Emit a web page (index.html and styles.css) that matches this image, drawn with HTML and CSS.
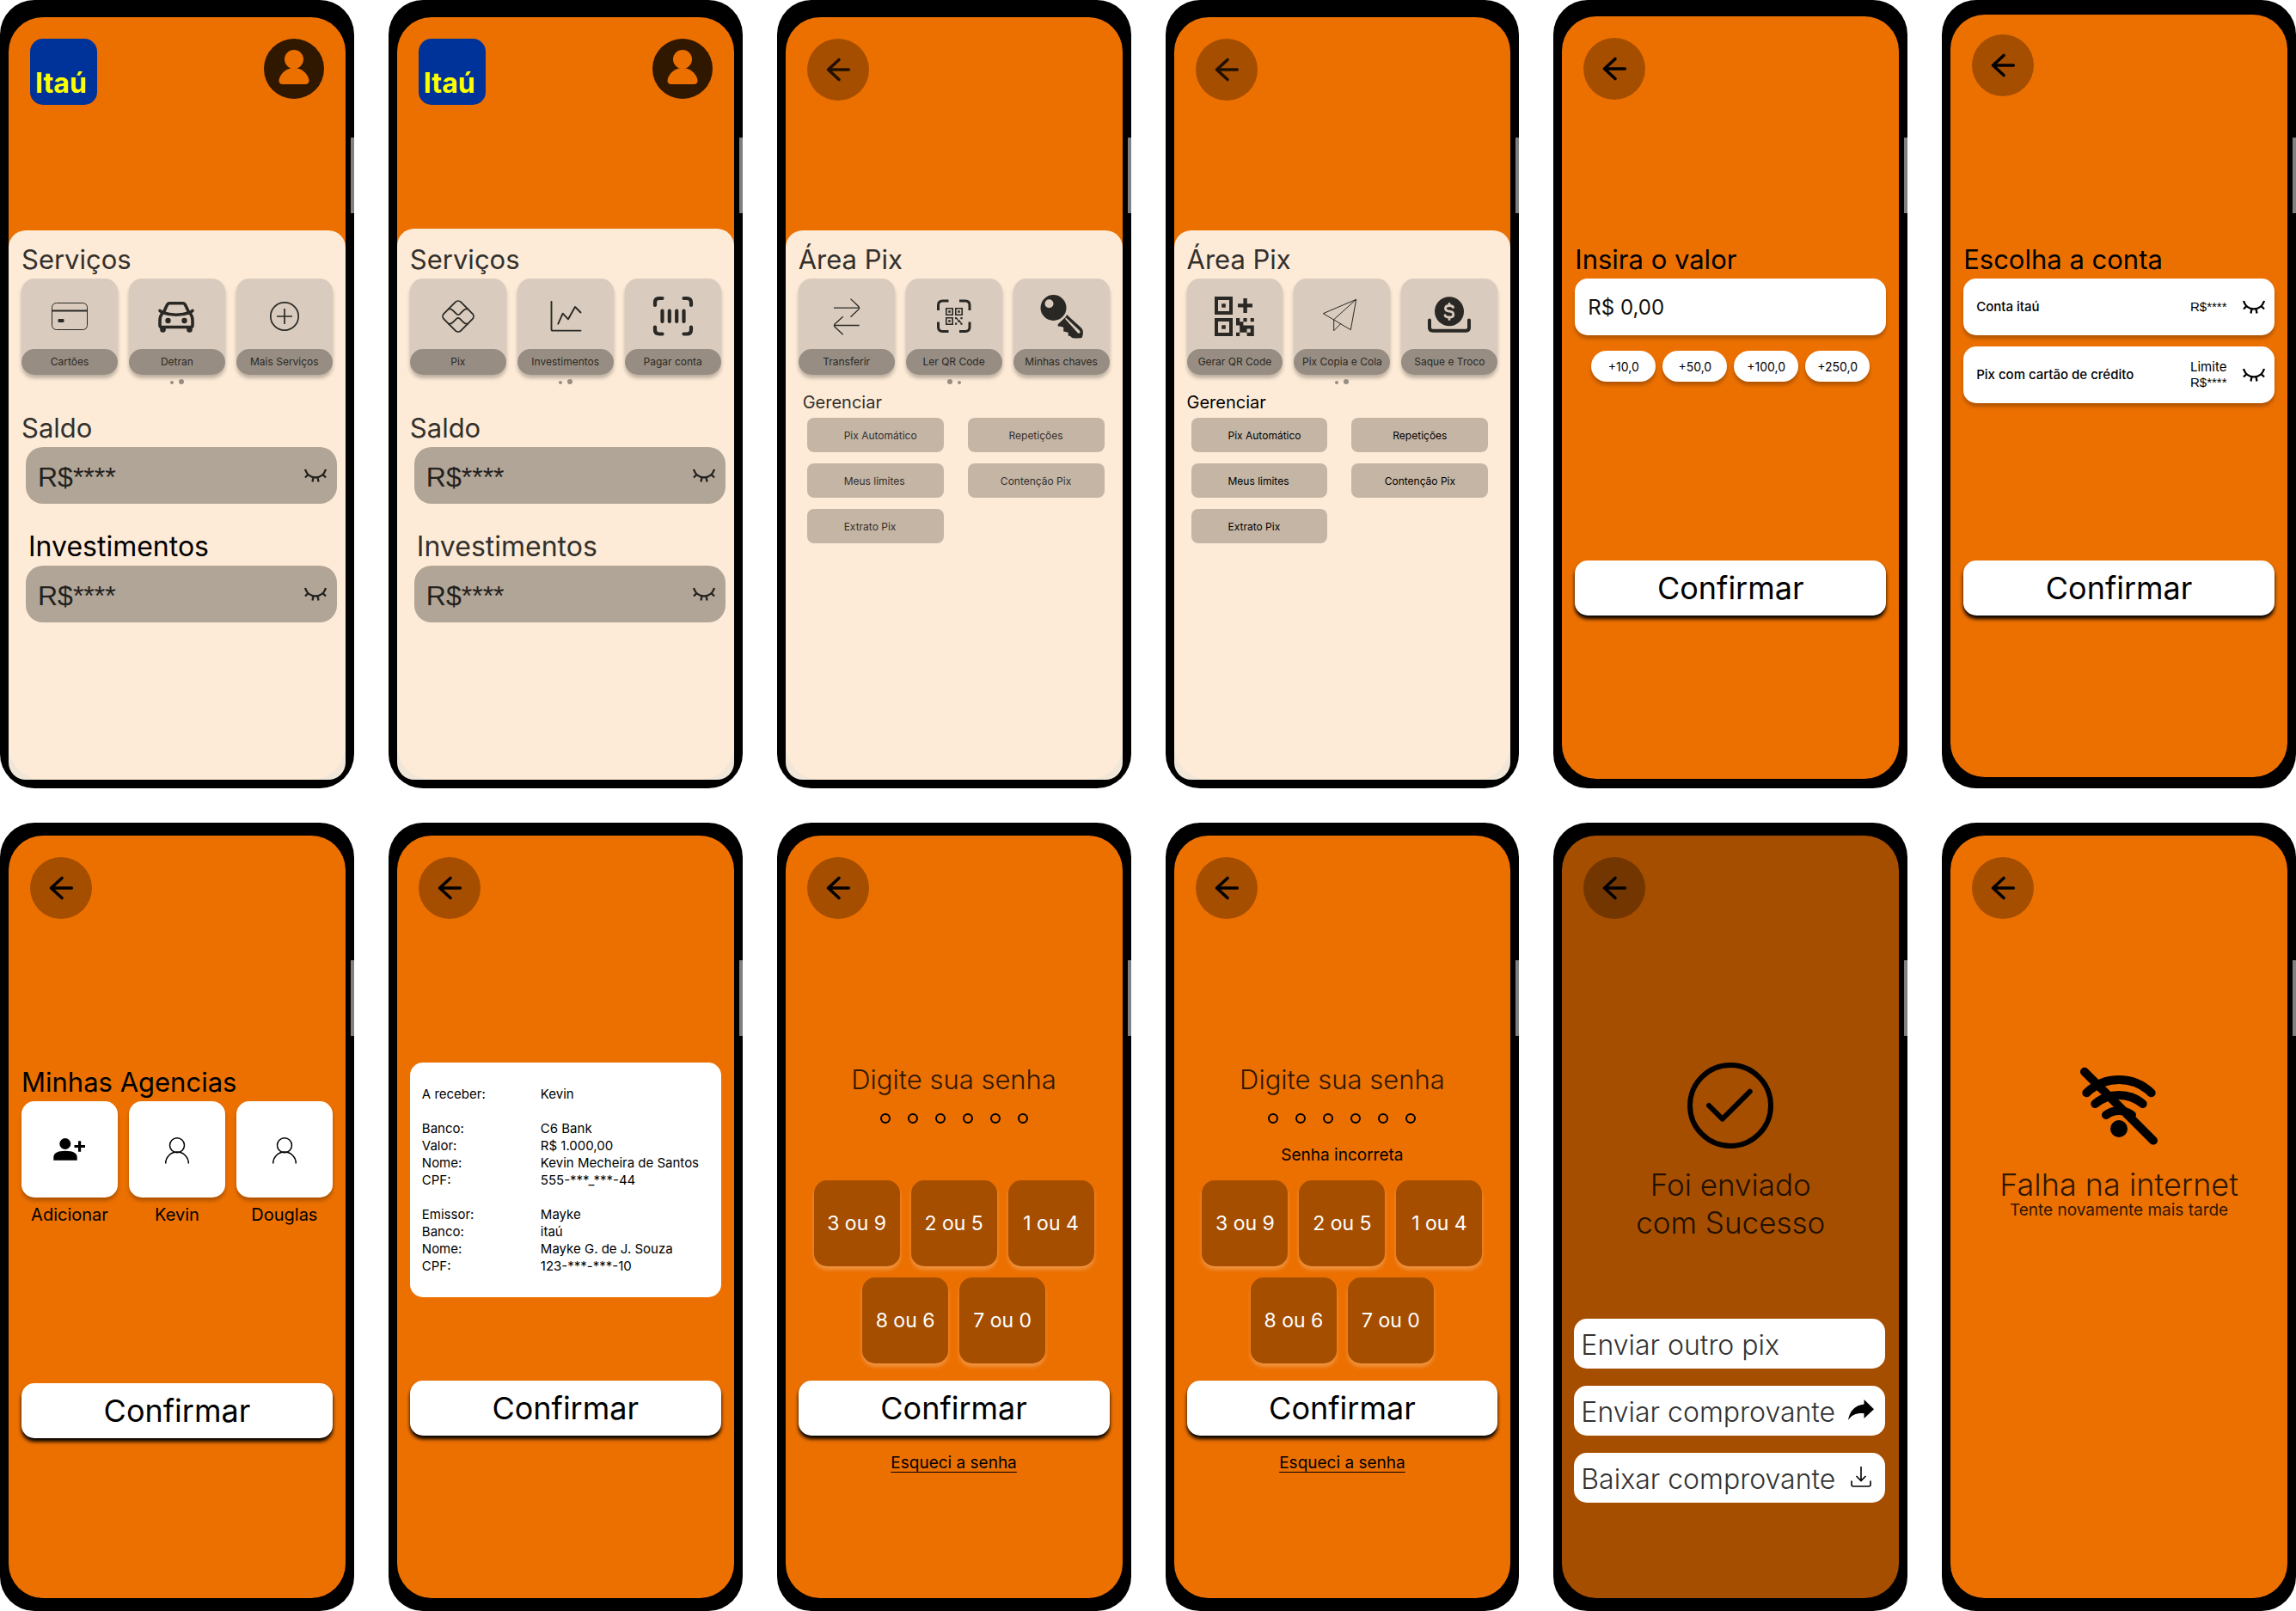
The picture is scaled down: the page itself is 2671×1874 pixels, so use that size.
FILE: index.html
```html
<!DOCTYPE html>
<html lang="pt-BR">
<head>
<meta charset="utf-8">
<meta name="viewport" content="width=device-width, initial-scale=1">
<title>Itaú - Telas do aplicativo</title>
<link rel="stylesheet" href="styles.css">
</head>
<body>
<svg class="sprite" aria-hidden="true">
  <symbol id="i-back" viewBox="0 0 72 72"><path d="M48.300 36H24.500M37 24.500L24.500 36l12.500 11.500" fill="none" stroke="currentColor" stroke-width="3.600" stroke-linecap="round" stroke-linejoin="round"/></symbol>
  <symbol id="i-user" viewBox="0 0 70 70"><circle cx="35" cy="24" r="11" fill="currentColor"/><path d="M17.500 48C19 40 27 34 35 34s16 6 17.500 14q.5 5-4.500 5H22q-5 0-4.500-5z" fill="currentColor"/></symbol>
  <symbol id="i-eye" viewBox="0 0 26 16"><path d="M1 1C5 13.500 21 13.500 25 1M4.500 7L1 10.500M21.500 7l3.500 3.500M10.500 10L9.500 15.500M15.500 10l1 5.500" fill="none" stroke="currentColor" stroke-width="2.300"/></symbol>
  <symbol id="i-card" viewBox="0 0 60 60"><rect x="9.500" y="17.500" width="41" height="31" rx="5" fill="none" stroke="currentColor"/><path d="M9.500 26.500h41" stroke="currentColor" stroke-width="2"/><rect x="16.500" y="36" width="7" height="4" rx="1" fill="currentColor"/></symbol>
  <symbol id="i-car" viewBox="0 0 60 60"><g fill="none" stroke="currentColor" stroke-linecap="round" stroke-linejoin="round"><path d="M14.500 28L18.500 19.500Q19.300 17.800 21 17.800H37Q38.700 17.800 39.500 19.500L43.500 28" stroke-width="3.600"/><path d="M10 26.500L13 28.500Q29 34 45 28.500L48 26.500" stroke-width="3.600"/><path d="M13.500 29Q10 32 10 38V43.500Q10 45.500 12 45.500H46Q48 45.500 48 43.500V38Q48 32 44.500 29" stroke-width="3.600"/></g><circle cx="19.500" cy="38" r="3.200" fill="currentColor"/><circle cx="38.500" cy="38" r="3.200" fill="currentColor"/><path d="M10.200 44h6.600v4.500a3.300 3.300 0 0 1-6.600 0zM41.200 44h6.600v4.500a3.300 3.300 0 0 1-6.600 0z" fill="currentColor"/></symbol>
  <symbol id="i-plus" viewBox="0 0 60 60"><path d="M30 24v18M21 33h18" stroke="currentColor" stroke-width="1.700"/><circle cx="30" cy="33" r="16.200" fill="none" stroke="currentColor" stroke-width="1.700"/></symbol>
  <symbol id="i-pix" viewBox="0 0 60 60"><g fill="none" stroke="currentColor" stroke-width="1.800"><rect x="16" y="19" width="28" height="28" rx="4.500" transform="rotate(45 30 33)"/><path d="M18 24.300h2q2 0 3.600 1.600l4.600 4.500q1.800 1.500 3.600 0l4.600-4.500q1.600-1.600 3.600-1.600h2M18 41.700h2q2 0 3.600-1.600l4.600-4.500q1.800-1.500 3.600 0l4.600 4.500q1.600 1.600 3.600 1.600h2"/></g></symbol>
  <symbol id="i-chart" viewBox="0 0 60 60"><path d="M13.500 16v32q0 1.600 1.600 1.600H47.500M21.300 41.700l5.400-12 6.300 6.600 8-14.300 6.500 6.500" fill="none" stroke="currentColor" stroke-width="1.900" stroke-linecap="round" stroke-linejoin="round"/></symbol>
  <symbol id="i-barcode" viewBox="0 0 60 60"><path d="M9 20v-3q0-5 5-5h3.500M42.500 12H46q5 0 5 5v3M51 45.500v3q0 5-5 5h-3.500M17.500 53.500H14q-5 0-5-5v-3M17.500 26.500v12.500M25.800 26.500v12.500M34.200 26.500v12.500M42.500 26.500v12.500" fill="none" stroke="currentColor" stroke-width="4.200" stroke-linecap="round"/></symbol>
  <symbol id="i-transfer" viewBox="0 0 60 60"><path d="M15 23.200h29.500M34.500 12.600l9.600 9.200q1.200 1.400 0 2.800l-9.600 9.100M44.700 43.500H15.300M25.700 33.300l-9.800 9q-1.200 1.400 0 2.700l9.800 9.200" fill="none" stroke="currentColor" stroke-width="1.300"/></symbol>
  <symbol id="i-scan" viewBox="0 0 60 60"><path d="M11.500 26v-6q0-5 5-5h7M36 15h7q5 0 5 5v6M48 39.500v6q0 5-5 5h-7M23.500 50.500h-7q-5 0-5-5v-6" fill="none" stroke="currentColor" stroke-width="3"/><g fill="none" stroke="currentColor" stroke-width="1.600"><path d="M20.800 23.800h7.400v7.400h-7.400zM31.800 23.800h7.400v7.400h-7.400zM20.800 34.800h7.400v7.400h-7.400z"/></g><path d="M23.200 26.200h2.600v2.600h-2.600zM34.200 26.200h2.600v2.600h-2.600zM23.200 37.200h2.600v2.600h-2.600zM31 34h2.200v2.200H31zM37.400 34h2.200v2.200h-2.200zM34.200 37.200h2.600v2.600h-2.600zM31 40.500h2.200v2.200H31zM37.400 40.500h2.200v2.200h-2.200zM33 35.600h1.600v1.600H33zM36.400 39h1.600v1.600h-1.600z" fill="currentColor"/></symbol>
  <symbol id="i-key" viewBox="0 0 60 60"><path fill-rule="evenodd" fill="currentColor" d="M20.500 8a15 15 0 1 1 0 30 15 15 0 1 1 0-30zm-5 5.200a5 5 0 1 0 0 10 5 5 0 1 0 0-10z"/><path fill-rule="evenodd" fill="currentColor" d="M36 31L53 46.500q2.500 2.500 2 6l-.8 4q-.2 1.500-2 1.700l-5.200.3q-5 .5-7-2.500l-2.300-.5v-3.500l-2-.8-3.500-.7v-4.500l-2-1-4.500-.5v-2.200l7-6.800q1.500-.3 3.300-4.500zM35 34.500L34.200 36 49 52.500q1.500 1 2.500-.8.500-1-.7-2.200z"/></symbol>
  <symbol id="i-qradd" viewBox="0 0 60 60"><path d="M9 12h17v17H9zM9 37h17v17H9z" fill="none" stroke="currentColor" stroke-width="4"/><path d="M15.200 18.200h4.600v4.600h-4.600zM15.200 43.200h4.600v4.600h-4.600zM40.400 12h4.400v6.200H51v4.400h-6.200v6.400h-4.400v-6.400H34v-4.400h6.400z" fill="currentColor"/><path d="M32 35h4.200v8.400H32zM36.200 39.200h4.200v4.200h-4.200zM40.400 35h4.200v4.200h-4.200zM44.600 39.200h8.200V35h-4.100v4.200zM36.200 43.400h4.200v4.200h-4.200zM40.400 43.400h12.400v4.200H40.400zM36.200 47.600h8.400v4.200h-8.400zM48.700 47.600h4.100V56h-4.100zM32 51.800h4.200V56H32zM44.600 51.800h4.100V56h-4.100z" fill="currentColor"/></symbol>
  <symbol id="i-plane" viewBox="0 0 60 60"><path d="M46.700 13.300L8.300 29.700l32 19zL20.700 36.700v13l8.300-8.400" fill="none" stroke="currentColor" stroke-linejoin="round"/></symbol>
  <symbol id="i-cash" viewBox="0 0 60 60"><circle cx="30" cy="27.300" r="17" fill="currentColor"/><path d="M7 37.500v8.500q0 3.700 3.700 3.700h38.600q3.700 0 3.700-3.700v-8.500" fill="none" stroke="currentColor" stroke-width="4" stroke-linecap="round"/><path d="M34.500 22.500q-1-2-4.500-2-4.500 0-4.500 3.300 0 3 4.500 3.400 4.800.5 4.800 3.800 0 3.200-4.800 3.200-4 0-5-2.400M30 18.500v2M30 34v2.500" fill="none" stroke="#d9ccbe" stroke-width="2.800" stroke-linecap="round"/></symbol>
  <symbol id="i-adduser" viewBox="0 0 60 60"><circle cx="24.800" cy="23.500" r="6.500" fill="currentColor"/><path d="M11.300 42.700v-3.500q0-7.500 13.700-7.500t13.700 7.500v3.500zM40 20.200h3.200v4.800H48v3h-4.800v4.800H40V28h-4.500v-3H40z" fill="currentColor"/></symbol>
  <symbol id="i-person" viewBox="0 0 60 60"><g fill="none" stroke="currentColor" stroke-width="1.500"><circle cx="30" cy="25.300" r="8.500"/><path d="M16.700 46.400a13.300 13.300 0 0 1 26.600 0"/></g></symbol>
  <symbol id="i-check" viewBox="0 0 100 100"><g fill="none" stroke="currentColor" stroke-width="6" stroke-linecap="round" stroke-linejoin="round"><circle cx="50" cy="50" r="47"/><path d="M25 50l15.700 15.700 32-32"/></g></symbol>
  <symbol id="i-nowifi" viewBox="0 0 100 100"><g fill="none" stroke="currentColor" stroke-width="10" stroke-linecap="round"><path d="M10 10.700l80 80M12.300 35.300a54 54 0 0 1 75.400 0M22.300 48a43 43 0 0 1 55.400 0M35 61a25 25 0 0 1 30 0"/></g><circle cx="50" cy="77" r="10" fill="currentColor"/></symbol>
  <symbol id="i-share" viewBox="0 0 30 24"><path d="M0 24C2 13 8 6.500 18.500 5.500V0L30 11.300 18.500 22v-6C9 15.500 4 18 0 24z" fill="currentColor"/></symbol>
  <symbol id="i-download" viewBox="0 0 24 24"><path d="M12 0v16M6.500 11l5.500 5.500 5.500-5.500M1 16.500V21q0 2 2 2h18q2 0 2-2v-4.500" fill="none" stroke="currentColor" stroke-width="1.600"/></symbol>
</svg>

<div class="board">

  <section class="phone phone--sheet">
    <div class="screen">
      <header class="top">
        <span class="logo">Itaú</span>
        <button class="avatar" aria-label="Perfil"><svg><use href="#i-user"/></svg></button>
      </header>
      <main class="sheet">
        <h2 class="title">Serviços</h2>
        <div class="tiles">
          <button class="tile"><svg><use href="#i-card"/></svg><span>Cartões</span></button>
          <button class="tile"><svg><use href="#i-car"/></svg><span>Detran</span></button>
          <button class="tile"><svg><use href="#i-plus"/></svg><span>Mais Serviços</span></button>
        </div>
        <div class="dots"><i></i><i class="on"></i></div>
        <h2 class="title title--gap">Saldo</h2>
        <div class="balance"><span>R$****</span><button class="eye" aria-label="Mostrar saldo"><svg><use href="#i-eye"/></svg></button></div>
        <h2 class="title title--inset title--strong">Investimentos</h2>
        <div class="balance"><span>R$****</span><button class="eye" aria-label="Mostrar investimentos"><svg><use href="#i-eye"/></svg></button></div>
      </main>
    </div>
  </section>

  <section class="phone phone--sheet phone--tall">
    <div class="screen">
      <header class="top">
        <span class="logo">Itaú</span>
        <button class="avatar" aria-label="Perfil"><svg><use href="#i-user"/></svg></button>
      </header>
      <main class="sheet">
        <h2 class="title">Serviços</h2>
        <div class="tiles">
          <button class="tile"><svg><use href="#i-pix"/></svg><span>Pix</span></button>
          <button class="tile"><svg><use href="#i-chart"/></svg><span>Investimentos</span></button>
          <button class="tile"><svg><use href="#i-barcode"/></svg><span>Pagar conta</span></button>
        </div>
        <div class="dots"><i></i><i class="on"></i></div>
        <h2 class="title title--gap">Saldo</h2>
        <div class="balance"><span>R$****</span><button class="eye" aria-label="Mostrar saldo"><svg><use href="#i-eye"/></svg></button></div>
        <h2 class="title title--inset">Investimentos</h2>
        <div class="balance"><span>R$****</span><button class="eye" aria-label="Mostrar investimentos"><svg><use href="#i-eye"/></svg></button></div>
      </main>
    </div>
  </section>

  <section class="phone phone--sheet">
    <div class="screen">
      <header class="top"><button class="back back--soft" aria-label="Voltar"><svg><use href="#i-back"/></svg></button></header>
      <main class="sheet">
        <h2 class="title">Área Pix</h2>
        <div class="tiles">
          <button class="tile"><svg><use href="#i-transfer"/></svg><span>Transferir</span></button>
          <button class="tile"><svg><use href="#i-scan"/></svg><span>Ler QR Code</span></button>
          <button class="tile"><svg><use href="#i-key"/></svg><span>Minhas chaves</span></button>
        </div>
        <div class="dots"><i class="on"></i><i></i></div>
        <div class="manage manage--soft">
          <h3>Gerenciar</h3>
          <div class="manage-grid">
            <button>Pix Automático</button><button>Repetições</button>
            <button>Meus limites</button><button>Contenção Pix</button>
            <button>Extrato Pix</button>
          </div>
        </div>
      </main>
    </div>
  </section>

  <section class="phone phone--sheet">
    <div class="screen">
      <header class="top"><button class="back back--soft" aria-label="Voltar"><svg><use href="#i-back"/></svg></button></header>
      <main class="sheet">
        <h2 class="title">Área Pix</h2>
        <div class="tiles">
          <button class="tile"><svg><use href="#i-qradd"/></svg><span>Gerar QR Code</span></button>
          <button class="tile"><svg><use href="#i-plane"/></svg><span>Pix Copia e Cola</span></button>
          <button class="tile"><svg><use href="#i-cash"/></svg><span>Saque e Troco</span></button>
        </div>
        <div class="dots"><i></i><i class="on"></i></div>
        <div class="manage">
          <h3>Gerenciar</h3>
          <div class="manage-grid">
            <button>Pix Automático</button><button>Repetições</button>
            <button>Meus limites</button><button>Contenção Pix</button>
            <button>Extrato Pix</button>
          </div>
        </div>
      </main>
    </div>
  </section>

  <section class="phone phone--form phone--value">
    <div class="screen">
      <header class="top"><button class="back" aria-label="Voltar"><svg><use href="#i-back"/></svg></button></header>
      <main class="content">
        <label class="title title--strong" for="valor">Insira o valor</label>
        <input class="field" id="valor" type="text" value="R$ 0,00">
        <div class="chips"><button>+10,0</button><button>+50,0</button><button>+100,0</button><button>+250,0</button></div>
        <button class="confirm">Confirmar</button>
      </main>
    </div>
  </section>

  <section class="phone phone--form phone--account">
    <div class="screen">
      <header class="top"><button class="back" aria-label="Voltar"><svg><use href="#i-back"/></svg></button></header>
      <main class="content">
        <h2 class="title title--strong">Escolha a conta</h2>
        <div class="accounts">
          <div class="account"><span class="account-name">Conta itaú</span><span class="account-sum"><b>R$****</b></span><button class="eye" aria-label="Mostrar valor"><svg><use href="#i-eye"/></svg></button></div>
          <div class="account"><span class="account-name">Pix com cartão de crédito</span><span class="account-sum">Limite<b>R$****</b></span><button class="eye" aria-label="Mostrar limite"><svg><use href="#i-eye"/></svg></button></div>
        </div>
        <button class="confirm">Confirmar</button>
      </main>
    </div>
  </section>

  <section class="phone phone--low phone--form">
    <div class="screen">
      <header class="top"><button class="back" aria-label="Voltar"><svg><use href="#i-back"/></svg></button></header>
      <main class="content">
        <h2 class="title title--strong">Minhas Agencias</h2>
        <div class="contacts">
          <button class="contact"><span class="contact-box"><svg><use href="#i-adduser"/></svg></span>Adicionar</button>
          <button class="contact"><span class="contact-box"><svg><use href="#i-person"/></svg></span>Kevin</button>
          <button class="contact"><span class="contact-box"><svg><use href="#i-person"/></svg></span>Douglas</button>
        </div>
        <button class="confirm">Confirmar</button>
      </main>
    </div>
  </section>

  <section class="phone phone--low">
    <div class="screen">
      <header class="top"><button class="back" aria-label="Voltar"><svg><use href="#i-back"/></svg></button></header>
      <main class="content">
        <dl class="receipt">
          <dt>A receber:</dt><dd>Kevin</dd>
          <dt class="group">Banco:</dt><dd class="group">C6 Bank</dd>
          <dt>Valor:</dt><dd>R$ 1.000,00</dd>
          <dt>Nome:</dt><dd>Kevin Mecheira de Santos</dd>
          <dt>CPF:</dt><dd>555-***_***-44</dd>
          <dt class="group">Emissor:</dt><dd class="group">Mayke</dd>
          <dt>Banco:</dt><dd>itaú</dd>
          <dt>Nome:</dt><dd>Mayke G. de J. Souza</dd>
          <dt>CPF:</dt><dd>123-***-***-10</dd>
        </dl>
        <button class="confirm">Confirmar</button>
      </main>
    </div>
  </section>

  <section class="phone phone--low">
    <div class="screen">
      <header class="top"><button class="back" aria-label="Voltar"><svg><use href="#i-back"/></svg></button></header>
      <main class="content">
        <h2 class="pin-title">Digite sua senha</h2>
        <div class="pin"><i></i><i></i><i></i><i></i><i></i><i></i></div>
        <p class="pin-status" role="status"></p>
        <div class="keys"><button>3 ou 9</button><button>2 ou 5</button><button>1 ou 4</button><button>8 ou 6</button><button>7 ou 0</button></div>
        <button class="confirm">Confirmar</button>
      </main>
      <a class="forgot" href="#senha">Esqueci a senha</a>
    </div>
  </section>

  <section class="phone phone--low">
    <div class="screen">
      <header class="top"><button class="back" aria-label="Voltar"><svg><use href="#i-back"/></svg></button></header>
      <main class="content">
        <h2 class="pin-title">Digite sua senha</h2>
        <div class="pin"><i></i><i></i><i></i><i></i><i></i><i></i></div>
        <p class="pin-status" role="status">Senha incorreta</p>
        <div class="keys"><button>3 ou 9</button><button>2 ou 5</button><button>1 ou 4</button><button>8 ou 6</button><button>7 ou 0</button></div>
        <button class="confirm">Confirmar</button>
      </main>
      <a class="forgot" href="#senha">Esqueci a senha</a>
    </div>
  </section>

  <section class="phone phone--low phone--dark">
    <div class="screen">
      <header class="top"><button class="back" aria-label="Voltar"><svg><use href="#i-back"/></svg></button></header>
      <main class="content">
        <svg class="result-icon"><use href="#i-check"/></svg>
        <h2 class="result-title">Foi enviado<br>com Sucesso</h2>
        <div class="actions">
          <button>Enviar outro pix</button>
          <button>Enviar comprovante<svg class="icon-share"><use href="#i-share"/></svg></button>
          <button>Baixar comprovante<svg class="icon-download"><use href="#i-download"/></svg></button>
        </div>
      </main>
    </div>
  </section>

  <section class="phone phone--low">
    <div class="screen">
      <header class="top"><button class="back" aria-label="Voltar"><svg><use href="#i-back"/></svg></button></header>
      <main class="content">
        <svg class="result-icon"><use href="#i-nowifi"/></svg>
        <h2 class="error-title">Falha na internet</h2>
        <p class="error-text">Tente novamente mais tarde</p>
      </main>
    </div>
  </section>

</div>
</body>
</html>
```
FILE: styles.css
```css
:root {
  --orange: #ec7000;
  --brown: #a54e00;
  --cream: #fdebd7;
  --ink: #33302c;
}

* { box-sizing: border-box; }

body {
  margin: 0;
  background: #fff;
  color: #000;
  font-family: Inter, "Liberation Sans", sans-serif;
}

h2, h3, p, dl, dd { margin: 0; font-weight: 400; }

button, input {
  margin: 0;
  padding: 0;
  border: 0;
  background: none;
  color: inherit;
  font: inherit;
}

button { cursor: pointer; }
svg { display: block; }
.sprite { position: absolute; width: 0; height: 0; }

.board {
  display: grid;
  grid-template-columns: repeat(auto-fit, minmax(380px, 1fr));
  gap: 40px;
}

/* Phone frame */
.phone {
  --bezel: 20px;
  --start: 279px;
  position: relative;
  display: flex;
  min-height: 917px;
  padding: var(--bezel) 10px calc(30px - var(--bezel));
  border-radius: 40px;
  background: #000;
}

/* Side button of the phone */
.phone::after {
  content: "";
  position: absolute;
  top: 160px;
  right: 0;
  width: 4px;
  height: 88px;
  background: #808080;
}

.phone--sheet { --start: 268px; }
.phone--tall { --start: 266px; }
.phone--form { --start: 282px; }
.phone--value { --bezel: 19px; }
.phone--account { --bezel: 17px; }
.phone--low { --bezel: 15px; }

.screen {
  flex: 1;
  display: flex;
  flex-direction: column;
  border-radius: 40px;
  background: var(--orange);
  overflow: hidden;
}

.phone--sheet .screen {
  border-radius: 40px 40px 20px 20px;
  background: linear-gradient(var(--orange) 50%, #f1e7d8 50%);
}

.phone--dark .screen { background: var(--brown); }

.top {
  display: flex;
  justify-content: space-between;
  align-items: flex-start;
  height: calc(var(--start) - var(--bezel));
  padding: 25px 25px 0;
}

.phone--account .top { padding-top: 23px; }

.logo {
  display: flex;
  align-items: flex-end;
  width: 78px;
  height: 77px;
  padding: 0 0 7px 6px;
  border-radius: 15px;
  background: #039;
  color: #ff0;
  font-size: 32px;
  font-weight: 700;
  line-height: 36px;
}

.avatar { border-radius: 50%; background: #2f1700; color: var(--orange); }
.avatar svg { width: 70px; height: 70px; }

.back { border-radius: 50%; background: var(--brown); color: #000; }
.back--soft { color: #211000; }
.back svg { width: 72px; height: 72px; }
.phone--dark .back { background: #733600; }

.content {
  display: flex;
  flex-direction: column;
  min-height: 434px;
  padding: 0 15px;
}

.sheet {
  flex: 1;
  padding: 14px 15px;
  border-radius: 20px 20px 40px 40px;
  background: var(--cream);
}

.phone--tall .sheet { padding-top: 16px; }

/* Headings */
.title {
  display: block;
  margin-bottom: 2px;
  color: var(--ink);
  font-size: 31px;
  line-height: 40px;
}

.title--gap { margin-top: 31px; }
.title--inset { margin-top: 30px; padding-left: 8px; font-size: 32px; }
.title--strong { color: #000; }

/* Service tiles */
.tiles { display: flex; gap: 13px; }

.tile {
  flex: 1;
  display: flex;
  flex-direction: column;
  align-items: center;
  height: 112px;
  border-radius: 15px;
  background: #d9ccbe;
  box-shadow: 0 4px 4px rgba(0, 0, 0, .25);
  color: #2a2825;
}

.tile svg { width: 60px; height: 60px; margin: 11px 0; }

.tile span {
  align-self: stretch;
  border-radius: 15px;
  background: #978d82;
  font-size: 12px;
  line-height: 30px;
}

.dots {
  display: flex;
  justify-content: center;
  align-items: flex-end;
  gap: 6px;
  margin-top: 5px;
}

.dots i { width: 4px; height: 4px; border-radius: 50%; background: #978d82; }
.dots .on { width: 6px; height: 6px; }

/* Hidden balances */
.balance {
  display: flex;
  align-items: center;
  justify-content: space-between;
  height: 66px;
  margin: 0 -5px 0 5px;
  padding: 4px 12px 0 14px;
  border-radius: 20px;
  background: #b0a596;
  color: #23211e;
  font-family: "Liberation Sans", Arial, sans-serif;
  font-size: 32px;
}

.eye svg { width: 26px; height: 16px; overflow: visible; }
.balance .eye { padding-bottom: 4px; }

/* Pix management */
.manage { margin-top: 9px; }
.manage h3 { margin-bottom: 6px; font-size: 20px; line-height: 24px; }

.manage-grid {
  display: grid;
  grid-template-columns: 1fr 1fr;
  gap: 13px 28px;
  margin: 0 11px 0 5px;
}

.manage-grid button {
  height: 40px;
  border-radius: 8px;
  background: #c4b5a5;
  font-size: 12px;
}

.manage-grid button:nth-child(odd) { padding-left: 43px; text-align: left; }

.manage--soft { color: var(--ink); }
.manage--soft h3 { padding-left: 5px; }
.manage--soft .manage-grid { margin: 0 6px 0 10px; }

/* Forms */
.field {
  width: 100%;
  height: 66px;
  padding: 0 15px;
  border-radius: 15px;
  background: #fff;
  box-shadow: 0 4px 4px rgba(0, 0, 0, .25);
  color: #111;
  font-size: 24px;
}

.chips { display: flex; gap: 8px; margin: 18px 19px 0; }

.chips button {
  flex: 1;
  height: 36px;
  border-radius: 18px;
  background: #fff;
  box-shadow: 0 4px 4px rgba(0, 0, 0, .25);
  font-size: 14px;
}

.confirm {
  height: 64px;
  margin-top: auto;
  border-radius: 15px;
  background: #fff;
  box-shadow: 0 4px 4px #000;
  font-size: 36px;
  line-height: 64px;
}

.accounts { display: flex; flex-direction: column; gap: 13px; }

.account {
  display: flex;
  align-items: center;
  height: 66px;
  padding: 0 11px 0 15px;
  border-radius: 15px;
  background: #fff;
  box-shadow: 0 4px 4px rgba(0, 0, 0, .25);
  font-size: 15px;
  line-height: 18px;
}

.account-name { flex: 1; font-weight: 500; }
.account-sum { width: 61px; }

.account-sum b {
  display: block;
  font-family: "Liberation Sans", Arial, sans-serif;
  font-weight: 400;
}

/* Contacts */
.contacts { display: flex; gap: 13px; }

.contact {
  flex: 1;
  display: flex;
  flex-direction: column;
  align-items: center;
  gap: 8px;
  font-size: 20px;
  line-height: 24px;
}

.contact-box {
  display: grid;
  place-items: center;
  align-self: stretch;
  height: 112px;
  border-radius: 15px;
  background: #fff;
  box-shadow: 0 4px 4px rgba(0, 0, 0, .25);
}

.contact-box svg { width: 60px; height: 60px; }

/* Transfer summary */
.receipt {
  display: grid;
  grid-template-columns: 138px 1fr;
  padding: 27px 0 26px 14px;
  border-radius: 15px;
  background: #fff;
  font-size: 15px;
  line-height: 20px;
  white-space: nowrap;
}

.receipt .group { margin-top: 20px; }

/* Password entry */
.pin-title {
  color: #2f1700;
  font-size: 31px;
  font-weight: 300;
  line-height: 40px;
  text-align: center;
}

.pin { display: flex; justify-content: center; gap: 20px; margin-top: 19px; }
.pin i { width: 12px; height: 12px; border: 2px solid #000; border-radius: 50%; }

.pin-status {
  height: 24px;
  margin: 25px 0 17px;
  font-size: 19px;
  line-height: 24px;
  text-align: center;
}

.keys { display: flex; flex-wrap: wrap; justify-content: center; gap: 13px; margin-bottom: 20px; }

.keys button {
  width: 100px;
  height: 100px;
  border-radius: 15px;
  background: var(--brown);
  box-shadow: 0 4px 4px rgba(255, 255, 255, .25);
  color: #fff;
  font-size: 23px;
}

.forgot {
  align-self: center;
  margin-top: 20px;
  color: #000;
  font-size: 19px;
  line-height: 24px;
  text-decoration-thickness: 1px;
  text-underline-offset: 4px;
}

/* Results */
.result-icon { align-self: center; width: 100px; height: 100px; }

.result-title {
  margin-top: 20px;
  color: #211000;
  font-size: 35px;
  font-weight: 300;
  line-height: 44px;
  text-align: center;
}

.actions {
  display: flex;
  flex-direction: column;
  gap: 20px;
  margin: 90px 1px 0 -1px;
}

.actions button {
  display: flex;
  align-items: center;
  justify-content: space-between;
  height: 58px;
  padding: 3px 13px 0 8px;
  border-radius: 15px;
  background: #fff;
  color: #333;
  font-size: 32px;
  font-weight: 300;
  white-space: nowrap;
}

.actions svg { margin-bottom: 5px; color: #000; }
.icon-share { width: 30px; height: 24px; }
.icon-download { width: 24px; height: 24px; margin-right: 3px; }

.error-title {
  margin-top: 22px;
  color: #2f1700;
  font-size: 36px;
  font-weight: 300;
  line-height: 40px;
  text-align: center;
}

.error-text {
  color: #2f1700;
  font-size: 19px;
  line-height: 20px;
  text-align: center;
}
```
